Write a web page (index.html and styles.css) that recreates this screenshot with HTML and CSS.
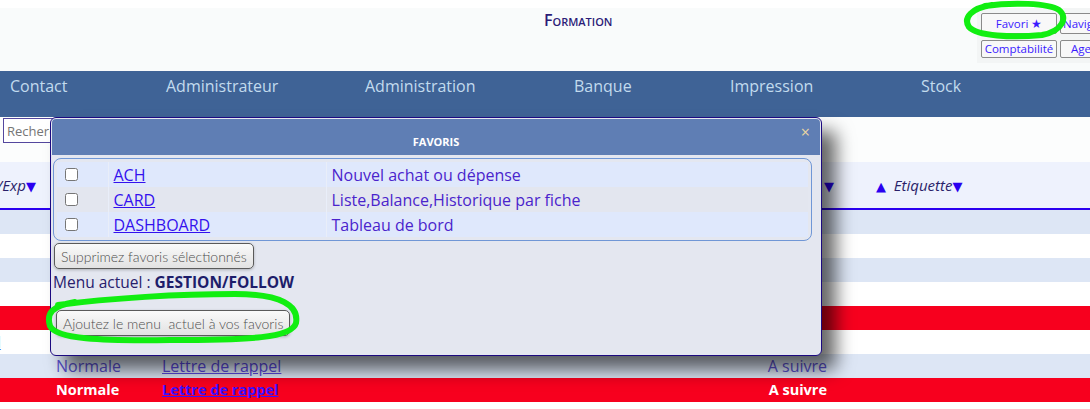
FILE: index.html
```html
<!DOCTYPE html>
<html lang="fr">
<head>
<meta charset="UTF-8">
<title>Formation</title>
<link rel="stylesheet" href="styles.css">
</head>
<body>

<header class="top">
  <div class="title">Formation</div>
  <div class="quick">
    <button class="qbtn">Favori ★</button>
    <button class="qbtn wide">Navigation</button>
    <button class="qbtn">Comptabilité</button>
    <button class="qbtn wide pad">Agenda</button>
  </div>
</header>

<nav class="menu">
  <a>Contact</a>
  <a>Administrateur</a>
  <a>Administration</a>
  <a>Banque</a>
  <a>Impression</a>
  <a>Stock</a>
</nav>

<div class="search">
  <input type="text" placeholder="Rechercher">
</div>

<div class="thead">
  <span class="th cut">/Exp<b class="arrow">▼</b></span>
  <span class="th"><b class="arrow">▼</b></span>
  <span class="th"><b class="arrow">▲</b>&nbsp; Etiquette<b class="arrow">▼</b></span>
</div>

<div class="rows">
  <div class="row light"></div>
  <div class="row white"></div>
  <div class="row light"></div>
  <div class="row white"></div>
  <div class="row red"></div>
  <div class="row white"><a class="lnk cut">l</a></div>
  <div class="row light dim">
    <span></span><span>Normale</span><a class="lnk">Lettre de rappel</a><span class="right">A suivre</span>
  </div>
  <div class="row red hot">
    <span></span><span>Normale</span><a class="lnk">Lettre de rappel</a><span class="right">A suivre</span>
  </div>
  <div class="row white"></div>
</div>

<!-- fenetre des favoris -->
<div class="modal">
  <div class="modal-head">FAVORIS<span class="close">×</span></div>
  <div class="fav-box">
    <table class="fav">
      <tr><td class="chk"><input type="checkbox"></td><td class="code"><a>ACH</a></td><td class="desc">Nouvel achat ou dépense</td></tr>
      <tr><td class="chk"><input type="checkbox"></td><td class="code"><a>CARD</a></td><td class="desc">Liste,Balance,Historique par fiche</td></tr>
      <tr><td class="chk"><input type="checkbox"></td><td class="code"><a>DASHBOARD</a></td><td class="desc">Tableau de bord</td></tr>
    </table>
  </div>
  <div class="actions">
    <button class="btn del">Supprimez favoris sélectionnés</button>
    <div class="current">Menu actuel : <b>GESTION/FOLLOW</b></div>
    <button class="btn add">Ajoutez le menu&nbsp; actuel à vos favoris</button>
  </div>
</div>

<!-- annotations au feutre vert -->
<svg class="marks" width="1090" height="409" viewBox="0 0 1090 409">
  <path d="M985 6 C1012 2 1048 3 1059 10 C1068 17 1063 31 1042 35 C1012 38 977 36 969 27 C963 18 971 8 992 5"/>
  <path d="M58 305 C110 298 180 294 235 294 C282 294 299 306 296 323 C292 338 250 340 170 340 C100 341 56 339 50 326 C46 313 52 306 75 302"/>
</svg>

</body>
</html>
```

FILE: styles.css
```css
* {box-sizing: border-box;}
html, body {margin: 0; overflow: hidden;}
body {
  position: relative;
  width: 1090px; height: 409px;
  font-family: "Open Sans", sans-serif;
  background: #fff;
}

.top {display: flex; height: 71px; border-top: 8px solid #fff; background: #f9fbfb; padding-left: 544px;}
.title {flex-shrink: 0; width: 433px; padding-top: 2px; font-size: 16px; line-height: 20px; font-weight: 600; font-variant: small-caps; color: #2c1c78;}
.quick {
  flex-shrink: 0; align-self: flex-start;
  display: grid; grid-template-columns: 76px 84px; grid-template-rows: 21px 18px; column-gap: 3px; row-gap: 6px;
  padding: 5px 0 5px 4px; background: #f3f5f5;
}
.qbtn {
  font: 11.5px/1 "Open Sans", sans-serif; color: #3a1aff; background: #f8f8f8;
  border: 1px solid #8a8a8a; border-radius: 2px; padding: 0 2px; white-space: nowrap; overflow: hidden;
}
.qbtn.wide {text-align: left;}
.qbtn.pad {padding-left: 10px;}

.menu {
  display: grid; grid-template-columns: 156px 199px 209px 156px 191px 1fr;
  height: 46px; padding: 3px 0 0 10px; background: #3f6396;
}
.menu a {color: #c2dbee; font-size: 16px; line-height: 24px;}

.search {height: 45px; padding: 1px 0 0 3px; background: #fcfdfd;}
.search input {width: 200px; height: 25px; padding: 0 3px; border: 1px solid #54479e; font: 13px "Open Sans", sans-serif;}
.search input::placeholder {color: #767676;}

.thead {
  display: grid; grid-template-columns: 824px 52px 1fr; align-items: center;
  height: 48px; background: #eef2fd; border-bottom: 2px solid #2b00f0;
  font-size: 15px; font-style: italic; color: #2a1f6a;
}
.arrow {font-style: normal; font-weight: normal; font-size: 13px; color: #2a00f0; font-family: "DejaVu Sans", sans-serif;}
.cut {margin-left: -3px;}

.row {
  display: grid; grid-template-columns: 56px 106px 546px 122px; align-items: center;
  height: 24px; font-size: 16px; line-height: 24px; white-space: nowrap;
}
.light {background: #dde6f5;}
.white {background: #fff;}
.red {background: #f7001e;}
.lnk {color: #3a10ff; text-decoration: underline;}
.row .right {text-align: right; padding-right: 3px;}
.dim {color: #5a50d0;}
.dim .lnk {color: #5a48e0;}
.row.white .lnk {color: #3a9cff;}
.hot {color: #fff; font-weight: 700; font-size: 14.5px;}

.modal {
  position: absolute; left: 50px; top: 117px; width: 772px;
  padding: 1px 1px 19px 1px; background: #e4e7f0;
  border: 1px solid #1c0a80; border-radius: 6px;
  box-shadow: 14px 14px 18px rgba(0, 0, 0, 0.6);
}
.modal-head {
  position: relative; height: 36px; padding-top: 16px; border-radius: 4px 4px 0 0;
  background: #5f7eb4; color: #fff; text-align: center;
  font-size: 11px; line-height: 14px; font-weight: 700;
}
.close {position: absolute; right: 10px; top: 3px; font-size: 16px; line-height: 20px; font-weight: 400; color: #ead6a2;}

.fav-box {width: 759px; margin: 3px 0 0 1px; padding: 3px; border: 1px solid #7097d6; border-radius: 8px;}
.fav {width: 100%; border-collapse: collapse;}
.fav td {height: 25px; padding: 0 5px; font-size: 16px; line-height: 22px; white-space: nowrap;}
.fav tr:nth-child(odd) td {background: #dfe8fc;}
.fav tr:nth-child(even) td {background: #e3e6ef;}
.fav td + td {border-left: 1px solid #e9eef9;}
.fav td.chk {width: 51px; padding: 0 0 0 4px;}
.fav td.chk input {display: block; margin: 0 0 0 4px;}
.fav td.code {width: 218px;}
.fav a {color: #3311ee; text-decoration: underline;}
.fav .desc {color: #4a24cc;}

.actions {display: flex; flex-direction: column; align-items: flex-start;}
.btn {
  height: 26px; padding: 3px 6px;
  font: 300 14px "Lato", sans-serif; color: #4e4e4e;
  background: linear-gradient(#fafafa, #e2e2e2);
  border: 1px solid #5a5a5a; border-radius: 5px;
  box-shadow: 0 1px 3px rgba(0, 0, 0, 0.25);
}
.del {margin: 2px 0 0 2px;}
.current {margin-top: 3px; padding-left: 1px; font-size: 15.5px; line-height: 20px; color: #27206c;}
.current b {color: #1d1d6a;}
.add {margin: 18px 0 0 4px;}

.marks {position: absolute; left: 0; top: 0; pointer-events: none;}
.marks path {fill: none; stroke: #11ee11; stroke-width: 6; stroke-linecap: round; stroke-linejoin: round;}
```
